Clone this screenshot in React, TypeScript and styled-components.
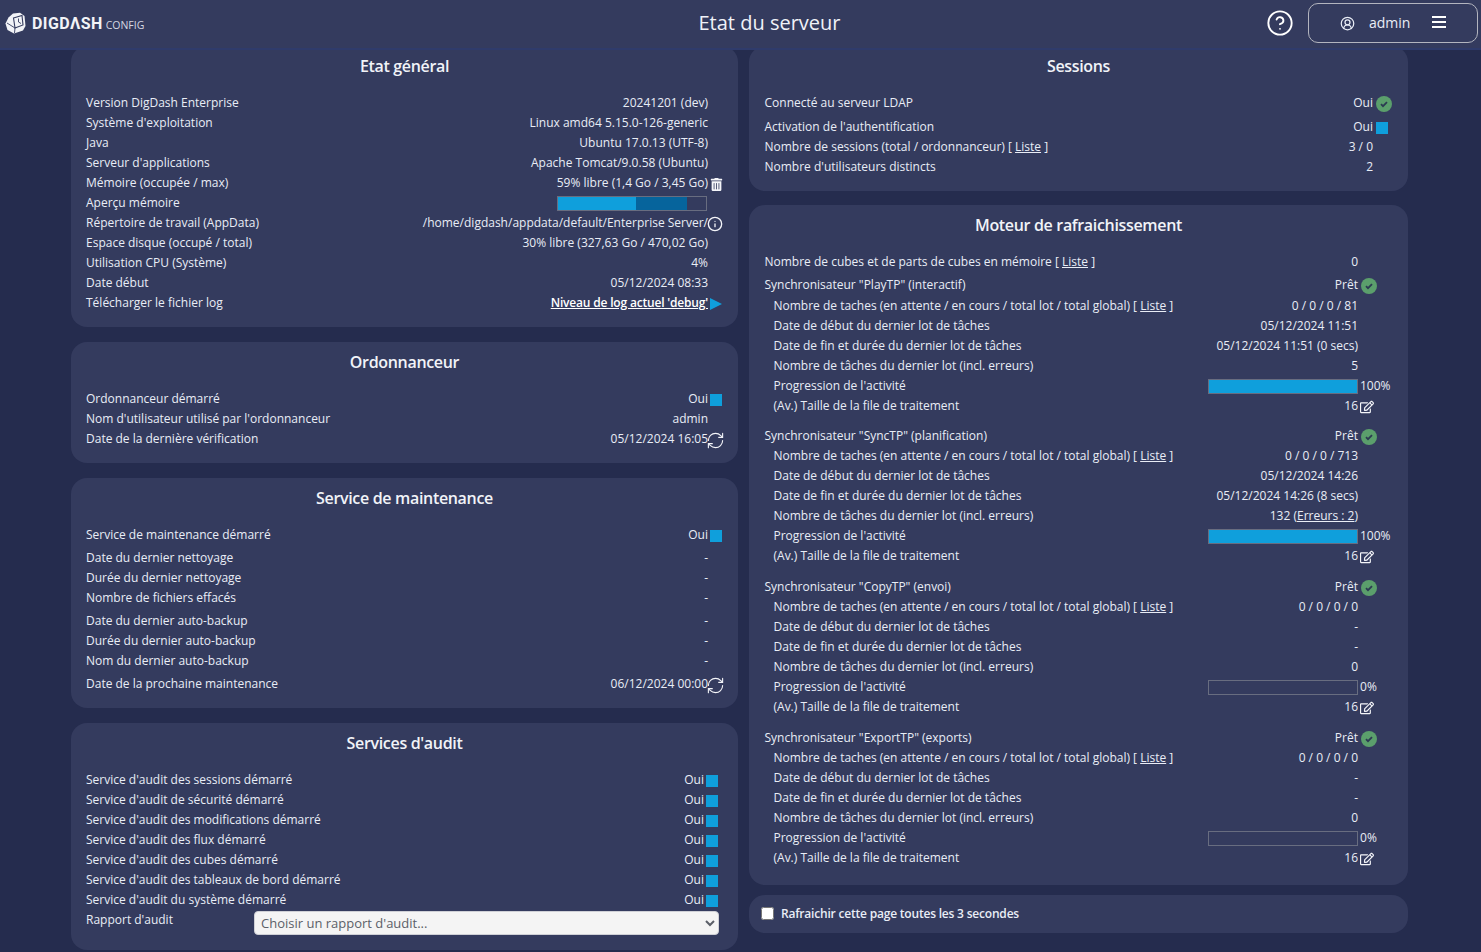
import styled, { createGlobalStyle } from 'styled-components'
import { CircleHelp, CircleUserRound, Info, RefreshCw } from 'lucide-react'
import { FaRegEdit, FaTrashAlt } from 'react-icons/fa'

const GlobalStyle = createGlobalStyle`
  html, body {
    margin: 0;
    padding: 0;
    height: 100%;
    overflow: hidden;
    background: #252c4e;
  }
  body {
    font-family: "Open Sans", "Liberation Sans", sans-serif;
    font-size: 12px;
    color: #e9edf6;
  }
`

const Header = styled.header`
  position: relative;
  z-index: 1;
  display: flex;
  align-items: center;
  box-sizing: border-box;
  height: 50px;
  padding-bottom: 2px;
  background: #343b5e;
  border-bottom: 2px solid #2f3b6b;
`

const Logo = styled.div`
  width: 280px;
  display: flex;
  align-items: center;
  padding-left: 5px;
  box-sizing: border-box;
`

const LogoName = styled.span`
  margin-left: 6px;
  font-family: "Roboto", sans-serif;
  font-size: 16px;
  font-weight: 700;
  letter-spacing: 0.4px;
  color: #f2f3f7;
`

const LogoSuffix = styled.span`
  margin-left: 3px;
  margin-top: 3px;
  font-size: 10.5px;
  color: #d5d8e2;
`

const PageTitle = styled.h1`
  flex: 1;
  margin: 0 0 2px;
  text-align: center;
  font-size: 20px;
  font-weight: 400;
  color: #f0f2f8;
`

const HeaderActions = styled.div`
  display: flex;
  align-items: center;
  gap: 14px;
  padding-right: 3px;
  padding-left: 7px;
  color: #fff;
`

const UserButton = styled.button`
  display: flex;
  align-items: center;
  box-sizing: border-box;
  width: 170px;
  height: 40px;
  padding: 0 0 0 31px;
  background: transparent;
  border: 1px solid #b3b5bf;
  border-radius: 10px;
  color: #e9edf6;
  font: 400 14px "Open Sans", sans-serif;
`

const UserName = styled.span`
  margin-left: 14px;
  margin-right: 22px;
  padding-bottom: 2px;
`

const Hamburger = styled.svg`
  margin-bottom: 2px;
`

const Columns = styled.main`
  display: grid;
  grid-template-columns: 667px 659px;
  column-gap: 11px;
  align-items: start;
  margin-top: -4px;
  padding-left: 71px;
`

const Column = styled.div`
  display: flex;
  flex-direction: column;
`

const Panel = styled.section<{ $gap?: number }>`
  margin-bottom: ${p => p.$gap ?? 15}px;
  padding: 8px 15px 14px;
  background: #343b5e;
  border-radius: 16px;
`

const PanelTitle = styled.h2`
  margin: 0 0 15px;
  height: 24px;
  line-height: 24px;
  text-align: center;
  font-size: 16px;
  font-weight: 600;
  letter-spacing: -0.33px;
  color: #f1f3f8;
`

const Tail = styled.span<{ $inset?: number }>`
  display: flex;
  align-items: flex-start;
  flex: none;
  box-sizing: border-box;
  padding-left: ${p => p.$inset ?? 2}px;
  height: 20px;
`

const Rows = styled.div<{ $tail: number }>`
  margin-right: -15px;
  ${Tail} {
    width: ${p => p.$tail}px;
  }
`

const RightColumn = styled(Column)`
  ${Rows} {
    padding-left: 0.5px;
  }
`

const Row = styled.div<{ $h?: number; $indent?: boolean }>`
  display: flex;
  height: ${p => p.$h ?? 20}px;
  line-height: 20px;
  padding-left: ${p => (p.$indent ? 9 : 0)}px;
`

const Label = styled.span`
  flex: 1;
  white-space: nowrap;
`

const Value = styled.span`
  white-space: nowrap;
`

const ListLink = styled.a`
  color: inherit;
  text-decoration: underline;
`

const StrongLink = styled(ListLink)`
  font-weight: 600;
  letter-spacing: -0.18px;
  color: #fff;
`

const Square = styled.span`
  width: 12px;
  height: 12px;
  margin-top: 5px;
  background: #0f9fdc;
`

const Bar = styled.div<{ $right?: number }>`
  position: relative;
  box-sizing: border-box;
  width: 150px;
  height: 15px;
  margin-top: 3px;
  margin-right: ${p => p.$right ?? 0}px;
  border: 1px solid #686d80;
`

const BarFill = styled.div<{ $dark?: boolean }>`
  position: absolute;
  left: 0;
  top: 0;
  bottom: 0;
  background: ${p => (p.$dark ? '#06649c' : '#0f9fdc')};
`

const Percent = styled.span`
  line-height: 20px;
`

const AuditSelect = styled.select`
  flex: none;
  box-sizing: border-box;
  width: 465px;
  height: 24px;
  margin: 1px 4px 0 0;
  padding: 0 2px;
  background: #f4f4f4;
  border: 1px solid #cfd0d6;
  border-radius: 4px;
  color: #5b5f68;
  font: 400 13px "Open Sans", sans-serif;
`

const RefreshPanel = styled(Panel)`
  display: flex;
  align-items: center;
  height: 38px;
  box-sizing: border-box;
  padding: 0 12px 2px;
  margin-bottom: 0;
`

const RefreshBox = styled.input`
  width: 13px;
  height: 13px;
  margin: 1px 7px 0 0;
`

const RefreshLabel = styled.label`
  font-weight: 600;
  letter-spacing: -0.2px;
`

const SyncBlock = styled.div<{ $gap: number }>`
  margin-bottom: ${p => p.$gap}px;
  &:last-child {
    margin-bottom: 3px;
  }
`

const IconWrap = styled.span<{ $top: number; $left?: number }>`
  display: inline-flex;
  margin-top: ${p => p.$top}px;
  margin-left: ${p => p.$left ?? 0}px;
  color: #f4f5f9;
`

const CheckBadge = () => (
  <IconWrap $top={3}>
    <svg width="16" height="16" viewBox="0 0 16 16">
      <circle cx="8" cy="8" r="8" fill="#5b9f6c" />
      <path d="M5 8.2 7 10.2 11 6.2" fill="none" stroke="#2c3a52" strokeWidth="1.8" />
    </svg>
  </IconWrap>
)

const BrandMark = () => (
  <svg width="21" height="22" viewBox="0 0 21 22">
    <path
      d="M8 1.5 15 .8 19.5 4 20.5 14 18 18.5 9 21.5 2.5 18 .5 11.5 3.5 5.5Z"
      fill="#f2f3f7"
    />
    <path d="M8.5 6 17 3.5 18 13 10 16Z" fill="none" stroke="#343b5e" strokeWidth="1.1" />
    <path d="M13.5 6.5 13.5 10 16 11.5M2 11 10 16 9.5 21" fill="none" stroke="#343b5e" strokeWidth="0.9" />
  </svg>
)

const PlayArrow = () => (
  <IconWrap $top={5}>
    <svg width="12" height="12" viewBox="0 0 12 12">
      <path d="M0 0 12 6 0 12Z" fill="#0f9fdc" />
    </svg>
  </IconWrap>
)

const Trash = () => (
  <IconWrap $top={5}>
    <FaTrashAlt size={13} />
  </IconWrap>
)

const InfoIcon = () => (
  <IconWrap $top={3} $left={-3}>
    <Info size={16} strokeWidth={2} />
  </IconWrap>
)

const Reload = () => (
  <IconWrap $top={2} $left={-4}>
    <RefreshCw size={19} strokeWidth={1.4} />
  </IconWrap>
)

const Edit = () => (
  <IconWrap $top={4}>
    <FaRegEdit size={14} />
  </IconWrap>
)

type Item = [string, React.ReactNode, React.ReactNode?, number?]

const List = ({ items, tail }: { items: Item[]; tail: number }) => (
  <Rows $tail={tail}>
    {items.map(([label, value, icon, h]) => (
      <Row key={label} $h={h}>
        <Label>{label}</Label>
        <Value>{value}</Value>
        <Tail>{icon}</Tail>
      </Row>
    ))}
  </Rows>
)

const general: Item[] = [
  ['Version DigDash Enterprise', '20241201 (dev)'],
  ["Système d'exploitation", 'Linux amd64 5.15.0-126-generic'],
  ['Java', 'Ubuntu 17.0.13 (UTF-8)'],
  ["Serveur d'applications", 'Apache Tomcat/9.0.58 (Ubuntu)'],
  ['Mémoire (occupée / max)', '59% libre (1,4 Go / 3,45 Go)', <Trash />],
  [
    'Aperçu mémoire',
    <Bar $right={1}>
      <BarFill $dark style={{ width: '87%' }} />
      <BarFill style={{ width: '53%' }} />
    </Bar>,
  ],
  ['Répertoire de travail (AppData)', '/home/digdash/appdata/default/Enterprise Server/', <InfoIcon />],
  ['Espace disque (occupé / total)', '30% libre (327,63 Go / 470,02 Go)'],
  ['Utilisation CPU (Système)', '4%'],
  ['Date début', '05/12/2024 08:33'],
  ['Télécharger le fichier log', <StrongLink>Niveau de log actuel 'debug'</StrongLink>, <PlayArrow />],
]

const scheduler: Item[] = [
  ['Ordonnanceur démarré', 'Oui', <Square />],
  ["Nom d'utilisateur utilisé par l'ordonnanceur", 'admin'],
  ['Date de la dernière vérification', '05/12/2024 16:05', <Reload />],
]

const maintenance: Item[] = [
  ['Service de maintenance démarré', 'Oui', <Square />, 23],
  ['Date du dernier nettoyage', '-'],
  ['Durée du dernier nettoyage', '-'],
  ['Nombre de fichiers effacés', '-', undefined, 23],
  ['Date du dernier auto-backup', '-'],
  ['Durée du dernier auto-backup', '-'],
  ['Nom du dernier auto-backup', '-', undefined, 23],
  ['Date de la prochaine maintenance', '06/12/2024 00:00', <Reload />],
]

const audits = [
  "Service d'audit des sessions démarré",
  "Service d'audit de sécurité démarré",
  "Service d'audit des modifications démarré",
  "Service d'audit des flux démarré",
  "Service d'audit des cubes démarré",
  "Service d'audit des tableaux de bord démarré",
  "Service d'audit du système démarré",
]

type Sync = {
  name: string
  tasks: string
  start: string
  end: string
  count: React.ReactNode
  progress: number
}

const syncs: Sync[] = [
  {
    name: 'Synchronisateur "PlayTP" (interactif)',
    tasks: '0 / 0 / 0 / 81',
    start: '05/12/2024 11:51',
    end: '05/12/2024 11:51 (0 secs)',
    count: '5',
    progress: 100,
  },
  {
    name: 'Synchronisateur "SyncTP" (planification)',
    tasks: '0 / 0 / 0 / 713',
    start: '05/12/2024 14:26',
    end: '05/12/2024 14:26 (8 secs)',
    count: (
      <>
        132 (<ListLink>Erreurs : 2</ListLink>)
      </>
    ),
    progress: 100,
  },
  {
    name: 'Synchronisateur "CopyTP" (envoi)',
    tasks: '0 / 0 / 0 / 0',
    start: '-',
    end: '-',
    count: '0',
    progress: 0,
  },
  {
    name: 'Synchronisateur "ExportTP" (exports)',
    tasks: '0 / 0 / 0 / 0',
    start: '-',
    end: '-',
    count: '0',
    progress: 0,
  },
]

const SyncSection = ({ sync, first }: { sync: Sync; first: boolean }) => (
  <SyncBlock $gap={first ? 10 : 11}>
    <Row $h={first ? 21 : 20}>
      <Label>{sync.name}</Label>
      <Value>Prêt</Value>
      <Tail $inset={3}>
        <CheckBadge />
      </Tail>
    </Row>
    <Row $indent>
      <Label>
        Nombre de taches (en attente / en cours / total lot / total global) [ <ListLink>Liste</ListLink> ]
      </Label>
      <Value>{sync.tasks}</Value>
      <Tail />
    </Row>
    <Row $indent>
      <Label>Date de début du dernier lot de tâches</Label>
      <Value>{sync.start}</Value>
      <Tail />
    </Row>
    <Row $indent>
      <Label>Date de fin et durée du dernier lot de tâches</Label>
      <Value>{sync.end}</Value>
      <Tail />
    </Row>
    <Row $indent>
      <Label>Nombre de tâches du dernier lot (incl. erreurs)</Label>
      <Value>{sync.count}</Value>
      <Tail />
    </Row>
    <Row $indent>
      <Label>Progression de l'activité</Label>
      <Value>
        <Bar>
          <BarFill style={{ width: `${sync.progress}%` }} />
        </Bar>
      </Value>
      <Tail>
        <Percent>{sync.progress}%</Percent>
      </Tail>
    </Row>
    <Row $indent>
      <Label>(Av.) Taille de la file de traitement</Label>
      <Value>16</Value>
      <Tail>
        <Edit />
      </Tail>
    </Row>
  </SyncBlock>
)

const App: React.FC = () => {
  return (
    <>
      <GlobalStyle />
      <Header>
        <Logo>
          <BrandMark />
          <LogoName>DIGDΛSH</LogoName>
          <LogoSuffix>CONFIG</LogoSuffix>
        </Logo>
        <PageTitle>Etat du serveur</PageTitle>
        <HeaderActions>
          <CircleHelp size={28} strokeWidth={1.6} />
          <UserButton>
            <CircleUserRound size={15} />
            <UserName>admin</UserName>
            <Hamburger width="14" height="12" viewBox="0 0 14 12">
              <path d="M0 1h14M0 6h14M0 11h14" stroke="#fff" strokeWidth="2" />
            </Hamburger>
          </UserButton>
        </HeaderActions>
      </Header>

      <Columns>
        <Column>
          <Panel>
            <PanelTitle>Etat général</PanelTitle>
            <List items={general} tail={30} />
          </Panel>
          <Panel>
            <PanelTitle>Ordonnanceur</PanelTitle>
            <List items={scheduler} tail={30} />
          </Panel>
          <Panel>
            <PanelTitle>Service de maintenance</PanelTitle>
            <List items={maintenance} tail={30} />
          </Panel>
          <Panel $gap={0}>
            <PanelTitle>Services d'audit</PanelTitle>
            <List items={audits.map(label => [label, 'Oui', <Square />])} tail={34} />
            <Row $h={26}>
              <Label>Rapport d'audit</Label>
              <AuditSelect defaultValue="">
                <option value="">Choisir un rapport d'audit...</option>
              </AuditSelect>
            </Row>
          </Panel>
        </Column>

        <RightColumn>
          <Panel $gap={14}>
            <PanelTitle>Sessions</PanelTitle>
            <Rows $tail={35}>
              <Row $h={24}>
                <Label>Connecté au serveur LDAP</Label>
                <Value>Oui</Value>
                <Tail $inset={3}>
                  <CheckBadge />
                </Tail>
              </Row>
              <Row>
                <Label>Activation de l'authentification</Label>
                <Value>Oui</Value>
                <Tail $inset={3}>
                  <Square />
                </Tail>
              </Row>
              <Row>
                <Label>
                  Nombre de sessions (total / ordonnanceur) [ <ListLink>Liste</ListLink> ]
                </Label>
                <Value>3 / 0</Value>
                <Tail />
              </Row>
              <Row>
                <Label>Nombre d'utilisateurs distincts</Label>
                <Value>2</Value>
                <Tail />
              </Row>
            </Rows>
          </Panel>
          <Panel $gap={10}>
            <PanelTitle>Moteur de rafraichissement</PanelTitle>
            <Rows $tail={50}>
              <Row $h={23}>
                <Label>
                  Nombre de cubes et de parts de cubes en mémoire [ <ListLink>Liste</ListLink> ]
                </Label>
                <Value>0</Value>
                <Tail />
              </Row>
              {syncs.map((sync, i) => (
                <SyncSection key={sync.name} sync={sync} first={i === 0} />
              ))}
            </Rows>
          </Panel>
          <RefreshPanel>
            <RefreshBox type="checkbox" id="refresh" />
            <RefreshLabel htmlFor="refresh">Rafraichir cette page toutes les 3 secondes</RefreshLabel>
          </RefreshPanel>
        </RightColumn>
      </Columns>
    </>
  )
}

export default App
